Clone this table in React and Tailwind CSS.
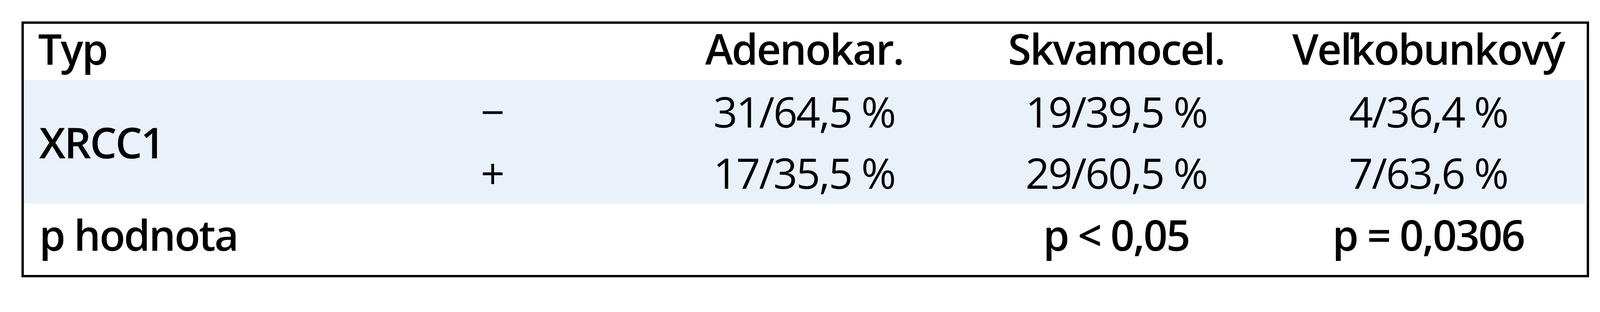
import React from 'react';

// Results table: XRCC1 expression by tumour type
const columns = ['Adenokar.', 'Skvamocel.', 'Veľkobunkový'];

const rows = [
  { sign: '−', values: ['31/64,5 %', '19/39,5 %', '4/36,4 %'] },
  { sign: '+', values: ['17/35,5 %', '29/60,5 %', '7/63,6 %'] },
];

const pValues = ['', 'p < 0,05', 'p = 0,0306'];

export default function App() {
  return (
    <div className="w-full h-screen overflow-hidden bg-white pt-[55px] pl-[1.354%] pr-[0.69%]">
      <div
        className="border-[6px] border-black bg-white text-black text-[108px] tracking-[-0.03em]"
        style={{ fontFamily: '"Open Sans", "Noto Sans", sans-serif' }}
      >
        {/* Header */}
        <div className="grid grid-cols-5 h-[144px] pt-[10px] pr-[0.15%] leading-none font-semibold">
          <div className="pl-[36px] whitespace-nowrap">Typ</div>
          <div />
          {columns.map((c) => (
            <div key={c} className="text-center whitespace-nowrap">
              {c}
            </div>
          ))}
        </div>

        {/* XRCC1 band */}
        <div className="pr-[0.15%]">
          <div className="grid grid-cols-5 grid-rows-2 h-[317px] pt-[3px] bg-[#e9f1fb] leading-[155px]">
            <div className="row-span-2 flex items-center pl-[39px] leading-none font-semibold">
              XRCC1
            </div>
            {rows.map((r) => (
              <React.Fragment key={r.sign}>
                <div className="text-center">{r.sign}</div>
                {r.values.map((v) => (
                  <div key={v} className="text-center whitespace-nowrap">
                    {v}
                  </div>
                ))}
              </React.Fragment>
            ))}
          </div>
        </div>

        {/* p values */}
        <div className="grid grid-cols-5 h-[183px] pt-[26px] pr-[0.15%] leading-none font-semibold">
          <div className="pl-[39px] whitespace-nowrap">p hodnota</div>
          <div />
          {pValues.map((p, i) => (
            <div key={i} className="text-center whitespace-nowrap">
              {p}
            </div>
          ))}
        </div>
      </div>
    </div>
  );
}
